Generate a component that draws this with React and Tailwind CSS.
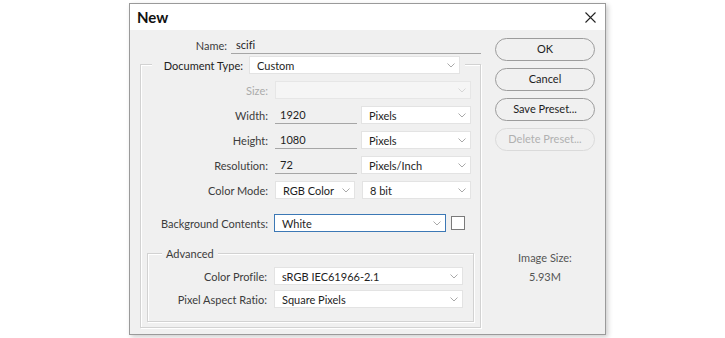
import React from "react"

const Chevron = ({ light }) => (
  <svg width="8" height="5" viewBox="0 0 8 5" className="shrink-0">
    <path
      d="M0.5 0.5 L4 4 L7.5 0.5"
      fill="none"
      stroke={light ? "#d6d6d6" : "#a9a9a9"}
      strokeWidth="1"
    />
  </svg>
)

const Select = ({ value, className = "", disabled, focused }) => (
  <div
    className={`h-[18px] flex items-center justify-between pl-[7px] pr-[4px] border ${
      focused
        ? "border-[#3c78b5] bg-white"
        : disabled
        ? "border-[#e6e6e6] bg-[#f5f5f5]"
        : "border-[#e3e3e3] bg-white"
    } ${className}`}
  >
    <span className="text-[#1e1e1e] leading-none whitespace-nowrap">{value}</span>
    <Chevron light={disabled} />
  </div>
)

const Field = ({ value, className = "" }) => (
  <div
    className={`h-[18px] flex items-center pl-[5px] border-b border-[#a6a6a6] ${className}`}
  >
    <span className="text-[#1e1e1e] leading-none">{value}</span>
  </div>
)

const Row = ({ label, labelW = "w-[127px]", disabled, children }) => (
  <div className="h-[18px] flex items-center gap-[7px]">
    <span
      className={`${labelW} text-right leading-none whitespace-nowrap ${
        disabled ? "text-[#ababab]" : "text-[#3c3c3c]"
      }`}
    >
      {label}
    </span>
    {children}
  </div>
)

const Button = ({ children, disabled }) => (
  <div
    className={`h-[23px] rounded-[12px] border flex items-center justify-center ${
      disabled
        ? "border-[#dadada] text-[#b0b0b0]"
        : "border-[#9c9c9c] text-[#1e1e1e]"
    }`}
  >
    {children}
  </div>
)

export default function App() {
  return (
    <div className="w-[725px] h-[338px] bg-white overflow-hidden font-[family-name:Lato,sans-serif] text-[11px] [font-variant-ligatures:none]">
      <div className="ml-[129px] mt-[3px] w-[477px] h-[332px] border border-[#9a9a9a] flex flex-col shadow-[2px_2px_5px_rgba(0,0,0,0.2)]">
        {/* title bar */}
        <div className="h-[26px] bg-white flex items-center justify-between pl-[7px] pr-[9px]">
          <span className="text-[15px] font-bold text-[#111] leading-none">New</span>
          <svg width="11" height="11" viewBox="0 0 11 11">
            <path d="M0.5 0.5 L10.5 10.5 M10.5 0.5 L0.5 10.5" stroke="#222" strokeWidth="1.1" />
          </svg>
        </div>

        {/* body */}
        <div className="flex-1 bg-[#f0f0f0] flex pr-[9px]">
          {/* left column */}
          <div className="w-[351px] flex flex-col">
            <div className="mt-[6px] h-[18px] flex items-center gap-[4px]">
              <span className="w-[97px] text-right text-[#3c3c3c] leading-none">Name:</span>
              <Field value="scifi" className="flex-1 pl-[1px]" />
            </div>

            {/* Document Type group */}
            <div className="mt-[10px] ml-[10px] border border-[#d2d2d2] shadow-[inset_1px_1px_0_#fff,1px_1px_0_#fff] flex flex-col pb-[5px]">
              <div className="-mt-[9px] ml-[11px] w-fit bg-[#f0f0f0] pr-[5px] flex items-center">
                <span className="w-[97px] pr-[6px] text-right text-[#222] leading-none whitespace-nowrap">Document Type:</span>
                <Select value="Custom" className="w-[211px]" />
              </div>

              <div className="mt-[7px] flex flex-col gap-[7px]">
                <Row label="Size:" disabled>
                  <Select value="" className="w-[196px]" disabled />
                </Row>
                <Row label="Width:">
                  <Field value="1920" className="w-[82px]" />
                  <Select value="Pixels" className="w-[110px] ml-[-3px]" />
                </Row>
                <Row label="Height:">
                  <Field value="1080" className="w-[82px]" />
                  <Select value="Pixels" className="w-[110px] ml-[-3px]" />
                </Row>
                <Row label="Resolution:">
                  <Field value="72" className="w-[82px]" />
                  <Select value="Pixels/Inch" className="w-[110px] ml-[-3px]" />
                </Row>
                <Row label="Color Mode:">
                  <Select value="RGB Color" className="w-[80px]" />
                  <Select value="8 bit" className="w-[109px]" />
                </Row>
              </div>

              <div className="mt-[15px] h-[18px] flex items-center gap-[6px]">
                <span className="w-[127px] text-right text-[#3c3c3c] leading-none whitespace-nowrap">Background Contents:</span>
                <Select value="White" className="w-[172px]" focused />
                <div className="ml-[-1px] w-[14px] h-[14px] bg-white border border-[#7a7a7a]" />
              </div>

              {/* Advanced group */}
              <div className="mt-[21px] mx-[6px] border border-[#d2d2d2] shadow-[inset_1px_1px_0_#fff,1px_1px_0_#fff] flex flex-col pb-[13px]">
                <div className="-mt-[9px] ml-[14px] w-fit bg-[#f0f0f0] px-[4px] h-[16px] flex items-center">
                  <span className="text-[#3c3c3c] leading-none">Advanced</span>
                </div>
                <div className="mt-[6px] flex flex-col gap-[5px]">
                  <Row label="Color Profile:" labelW="w-[119px]">
                    <Select value="sRGB IEC61966-2.1" className="w-[189px]" />
                  </Row>
                  <Row label="Pixel Aspect Ratio:" labelW="w-[119px]">
                    <Select value="Square Pixels" className="w-[189px]" />
                  </Row>
                </div>
              </div>
            </div>
          </div>

          {/* right column */}
          <div className="ml-[14px] w-[100px] flex flex-col">
            <div className="mt-[8px] flex flex-col gap-[7px]">
              <Button>OK</Button>
              <Button>Cancel</Button>
              <Button>Save Preset...</Button>
              <Button disabled>Delete Preset...</Button>
            </div>
            <div className="mt-[98px] flex flex-col items-center gap-[3px] text-[#555] leading-none">
              <span className="h-[16px] flex items-center">Image Size:</span>
              <span className="h-[16px] flex items-center">5.93M</span>
            </div>
          </div>
        </div>
      </div>
    </div>
  )
}
